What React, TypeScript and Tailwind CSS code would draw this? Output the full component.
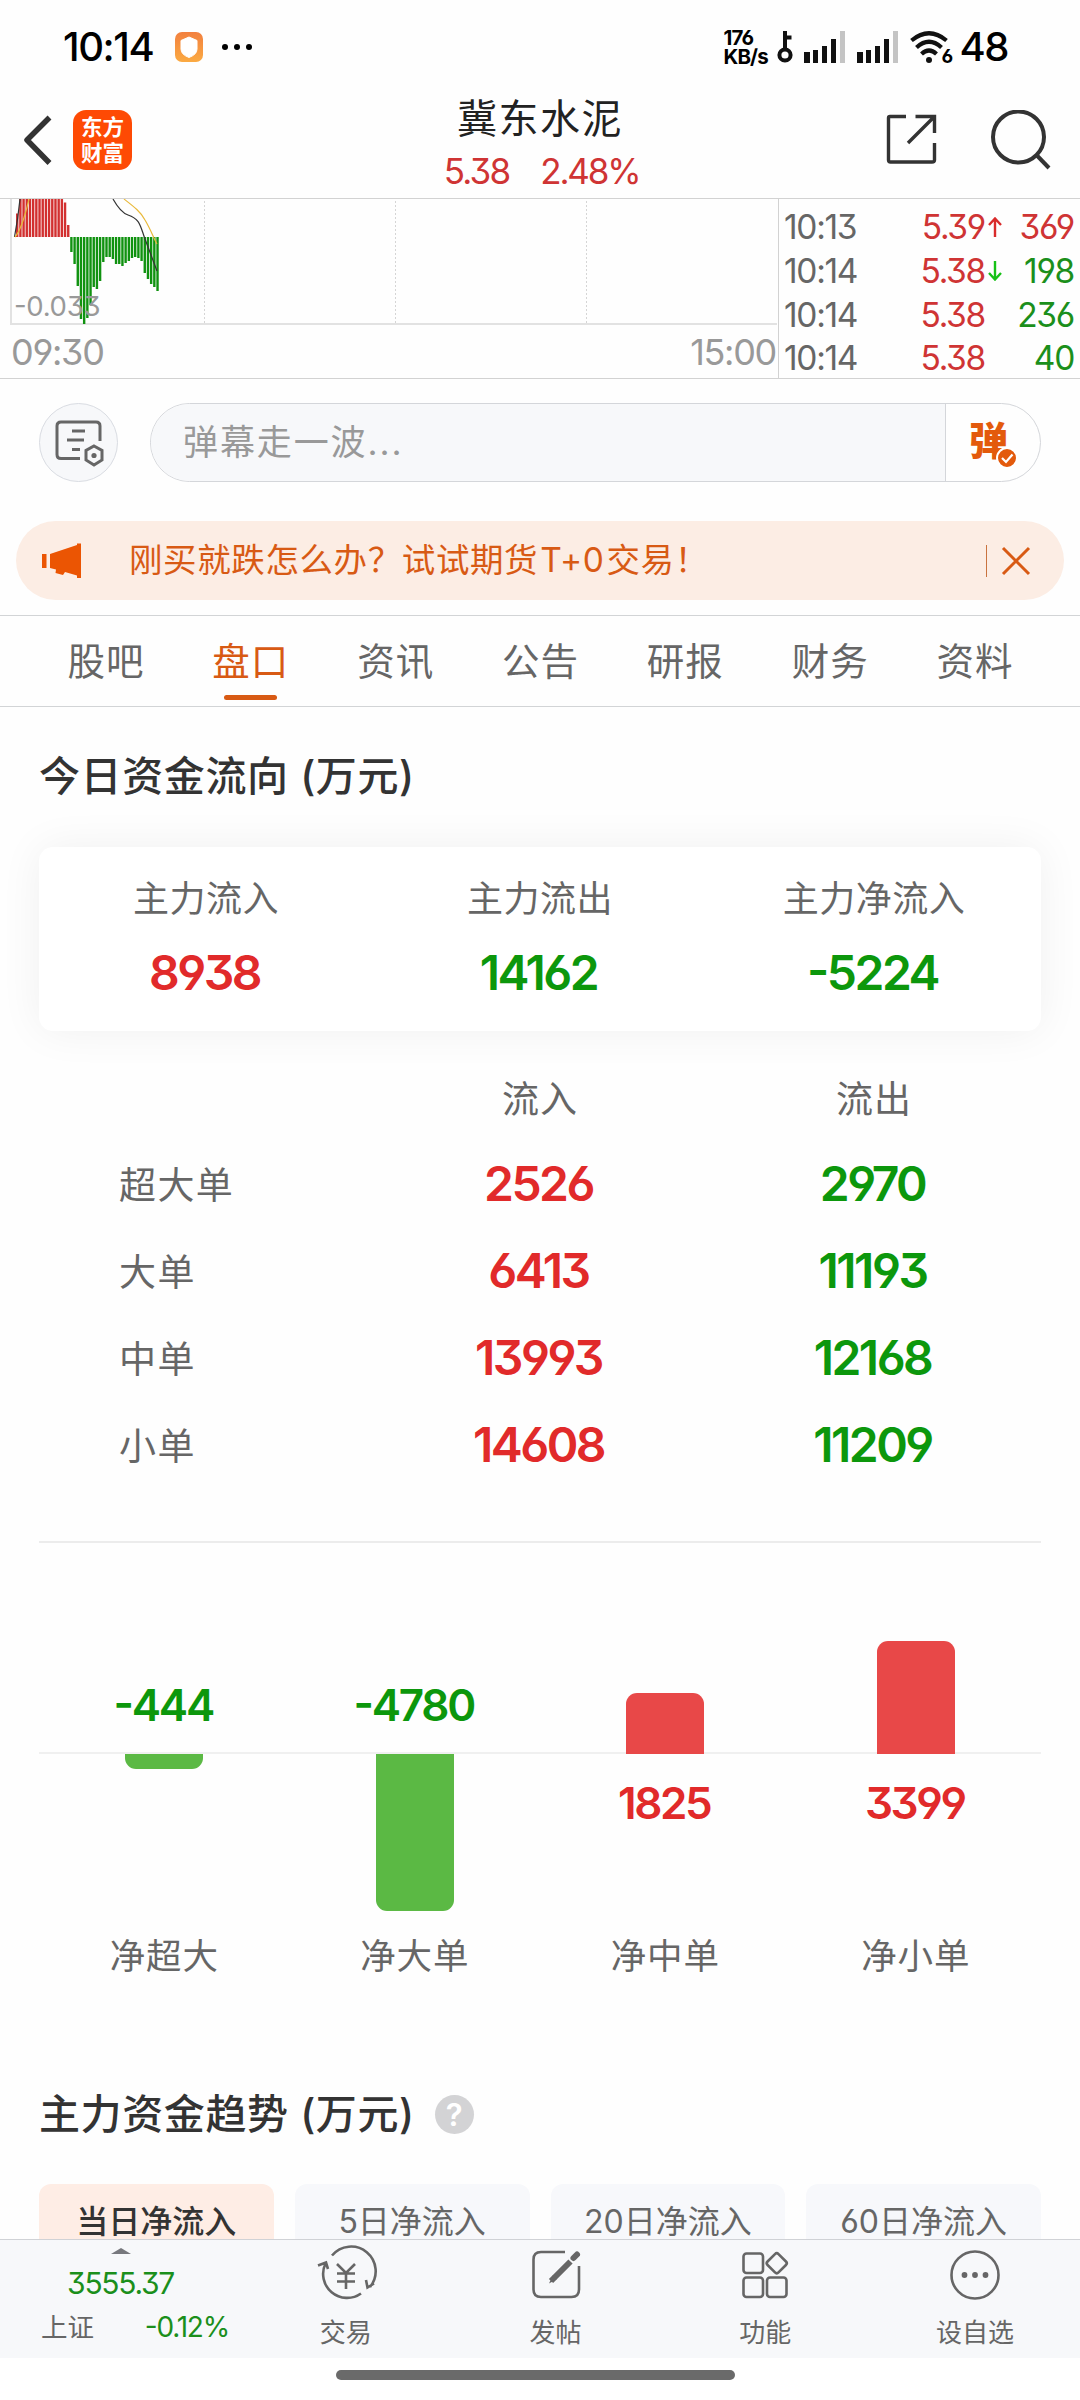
import { ReactNode } from "react";

const RED_BARS = [23.5, 38, 38, 38, 38, 38, 38, 38, 38, 38, 38, 38, 38, 38, 38, 34.5, 12];
const GREEN_BARS = [
  15, 27, 49, 82, 87, 81, 68, 50, 52, 44, 25, 20, 20, 22, 27, 27, 29, 26, 24, 21, 20, 21, 24, 36, 42, 47, 50, 54,
];

const ticks = [
  { time: "10:13", price: "5.39", dir: "up", vol: "369", color: "text-[#cf3434]" },
  { time: "10:14", price: "5.38", dir: "down", vol: "198", color: "text-[#1b8f1b]" },
  { time: "10:14", price: "5.38", dir: "", vol: "236", color: "text-[#1b8f1b]" },
  { time: "10:14", price: "5.38", dir: "", vol: "40", color: "text-[#1b8f1b]" },
];

const tabs = ["股吧", "盘口", "资讯", "公告", "研报", "财务", "资料"];

const summary = [
  { label: "主力流入", value: "8938", color: "text-[#e12a2a]" },
  { label: "主力流出", value: "14162", color: "text-[#0c970c]" },
  { label: "主力净流入", value: "-5224", color: "text-[#0c970c]" },
];

const orders = [
  { label: "超大单", inflow: "2526", outflow: "2970" },
  { label: "大单", inflow: "6413", outflow: "11193" },
  { label: "中单", inflow: "13993", outflow: "12168" },
  { label: "小单", inflow: "14608", outflow: "11209" },
];

const netBars = [
  { label: "净超大", value: "-444", height: 15, up: false },
  { label: "净大单", value: "-4780", height: 157, up: false },
  { label: "净中单", value: "1825", height: 61, up: true },
  { label: "净小单", value: "3399", height: 113, up: true },
];

const periods = ["当日净流入", "5日净流入", "20日净流入", "60日净流入"];

// Raises the hyphen to the middle of the digits
function Num({ children }: { children: string }) {
  return <span className="[font-feature-settings:'cv09','cv03','cv04','case']">{children}</span>;
}

function Signal() {
  return (
    <svg width="42" height="33" viewBox="0 0 42 33">
      <rect x="0" y="21" width="6" height="11" fill="#111" />
      <rect x="9" y="19" width="5" height="13" fill="#111" />
      <rect x="18" y="15" width="5" height="17" fill="#111" />
      <rect x="27" y="8" width="5" height="24" fill="#111" />
      <rect x="36" y="0" width="5" height="32" fill="#c4c4c4" />
    </svg>
  );
}

function StatusBar() {
  return (
    <div className="h-[94px] flex items-center text-black pl-[63px] pr-[72px]">
      <span className="text-[40px] leading-none font-medium tracking-[-1.400px] w-[112px]">10:14</span>
      <svg width="28" height="30" viewBox="0 0 28 30">
        <defs>
          <linearGradient id="shield" x1="0" y1="0" x2="0" y2="1">
            <stop offset="0" stopColor="#f2803f" />
            <stop offset="1" stopColor="#fbaa42" />
          </linearGradient>
        </defs>
        <rect width="28" height="30" rx="7" fill="url(#shield)" />
        <path d="M14 5 L22 8.5 V17 Q22 22.5 14 25.5 Q6 22.5 6 17 V8.5 Z" fill="#fff" stroke="#fff" strokeLinejoin="round" />
      </svg>
      <svg className="ml-[19px]" width="30" height="8" viewBox="0 0 30 8">
        <circle cx="3" cy="4" r="3" />
        <circle cx="15" cy="4" r="3" />
        <circle cx="27" cy="4" r="3" />
      </svg>
      <div className="ml-auto flex items-center">
        <div className="w-[53px] text-[20.500px] leading-[19px] font-bold tracking-[-0.900px]">
          <div>176</div>
          <div>KB/s</div>
        </div>
        <svg width="16" height="33" viewBox="0 0 16 33">
          <circle cx="8" cy="24" r="5.6" fill="none" stroke="#111" strokeWidth="4" />
          <path d="M8 19 V0 M8 6.5 H14.5" fill="none" stroke="#111" strokeWidth="4" />
        </svg>
        <div className="ml-[11px] flex gap-[11px]">
          <Signal />
          <Signal />
        </div>
        <div className="relative ml-[11px] w-[44px] h-[33px]">
          <svg width="44" height="33" viewBox="0 0 44 33">
            <g fill="none" stroke="#111" strokeWidth="4.2">
              <path d="M1.5 9.5 Q19 -5 36.500 9.500" />
              <path d="M6.500 16.500 Q19 5 31.500 16.500" />
              <path d="M11.500 23 Q19 16 26.500 23" />
            </g>
            <circle cx="19" cy="29" r="3" fill="#111" />
          </svg>
          <span className="absolute left-[32px] top-[16px] text-[19px] leading-[19px] font-bold">6</span>
        </div>
        <span className="ml-[6px] text-[40px] leading-none font-medium tracking-[-1.5px]">48</span>
      </div>
    </div>
  );
}

function Header() {
  return (
    <header className="h-[105px] flex justify-between border-b border-[#d2d2d2]">
      <div className="w-[360px] flex pt-[16px] pl-[22px]">
        <svg className="mt-[4px]" width="32" height="52" viewBox="0 0 32 52" fill="none" stroke="#333" strokeWidth="5.500">
          <path d="M27.500 3.500 L5 26 L27.500 49" strokeLinejoin="round" />
        </svg>
        <div className="ml-[19px] w-[59px] h-[60px] rounded-[13px] bg-[#fe4a04] text-white text-[21.500px] leading-[26px] font-bold text-center pt-[4px]">
          <div>东方</div>
          <div>财富</div>
        </div>
      </div>
      <div className="w-[360px] flex flex-col items-center">
        <h1 className="mt-[1px] text-[40px] leading-[48px] tracking-[1.500px] text-[#222]">冀东水泥</h1>
        <div className="mt-[10px] ml-[3px] flex gap-[31px] text-[35px] leading-[36px] tracking-[-1.800px] text-[#cf3434]">
          <span>5.38</span>
          <span className="tracking-[-2.200px]">2.48%</span>
        </div>
      </div>
      <div className="w-[360px] flex pt-[16px] justify-end pr-[28px]">
        <svg className="mt-[4px]" width="52" height="52" viewBox="0 0 52 52" fill="none" stroke="#333" strokeWidth="3.400">
          <path d="M20 2.500 H4 Q2.500 2.500 2.500 4 V46 Q2.500 48 4.500 48 H46 Q48.500 48 48.500 46 V29 M29.500 2.500 H48.500 V19 M48 3 L22 29" />
        </svg>
        <svg className="ml-[52px]" width="62" height="60" viewBox="0 0 62 60" fill="none" stroke="#333" strokeWidth="4">
          <circle cx="28.500" cy="27" r="25.500" />
          <path d="M46 44.500 L59 58" />
        </svg>
      </div>
    </header>
  );
}

function Chart() {
  return (
    <div className="h-[180px] flex border-b border-[#d2d2d2]">
      <div className="w-[778px] flex flex-col text-[#999]">
        <div className="relative h-[126px]">
          <svg className="absolute left-0 top-0" width="777" height="126" viewBox="0 0 777 126">
            <g stroke="#d5d5d5" strokeDasharray="2 2">
              <path d="M204.500 2 V125 M395.500 2 V125 M586.500 2 V125" />
            </g>
            <path d="M11 0 V125 H777" fill="none" stroke="#e2e2e2" strokeWidth="2" />
            {RED_BARS.map((h, i) => (
              <rect key={i} x={16 + i * 3.19} y={38 - h} width="2.400" height={h} fill="#d23030" />
            ))}
            {GREEN_BARS.map((h, i) => (
              <rect key={i} x={70.200 + i * 3.19} y="38" width="2.400" height={h} fill="#109210" />
            ))}
            <path d="M14.500 38 Q18 20 20 0 M113 0 C118 9 122 14 128 16 C140 20 140 26 145 40 L157 72" fill="none" stroke="#333" strokeWidth="1.200" />
            <path d="M15 38 Q22 30 29 0 M124 0 C133 7 141 13 145 21 C151 31 154 40 157 45" fill="none" stroke="#e9b93a" strokeWidth="1.200" />
          </svg>
          <span className="absolute left-[14px] top-[94px] text-[27.500px] leading-none tracking-[-0.300px]">
            <Num>-0.033</Num>
          </span>
        </div>
        <div className="flex justify-between pl-[11px] pr-[2px] pt-[9px] text-[36px] leading-none tracking-[-1.300px]">
          <span>09:30</span>
          <span>15:00</span>
        </div>
      </div>
      <div className="flex-1 border-l border-[#d2d2d2] pl-[5px] pr-[6px] pt-[6px] text-[33.500px] leading-[44px] tracking-[-1.300px]">
        {ticks.map((t, i) => (
          <div key={i} className="flex h-[43.800px]">
            <span className="w-[121px] text-[#666]">{t.time}</span>
            <span className="w-[80px] text-right text-[#cf3434]">{t.price}</span>
            <span className="w-[20px] flex items-center justify-center">
              {t.dir !== "" && (
                <svg width="14" height="20" viewBox="0 0 14 20" fill="none" strokeWidth="2.400" stroke={t.dir === "up" ? "#d92b2b" : "#16c116"}>
                  <path d={t.dir === "up" ? "M7 20 V2 M1 8 L7 1.500 L13 8" : "M7 0 V18 M1 12 L7 18.500 L13 12"} />
                </svg>
              )}
            </span>
            <span className={`flex-1 text-right ${t.color}`}>{t.vol}</span>
          </div>
        ))}
      </div>
    </div>
  );
}

function DanmuBar() {
  return (
    <div className="h-[142px] flex pt-[24px] pl-[39px] pr-[39px]">
      <div className="w-[79px] h-[79px] rounded-full border-[1.500px] border-[#d9dce2] bg-[#f7f8fa] flex items-center justify-center">
        <svg width="50" height="48" viewBox="0 0 50 48" fill="none" stroke="#666" strokeWidth="3">
          <path d="M26 39.500 H7 Q3 39.500 3 35.500 V7 Q3 3 7 3 H42 Q46 3 46 7 V22" />
          <path d="M18 12 H31 M13 21 H30 M18 30.500 H26" strokeWidth="2.800" />
          <path d="M40 27 L48 31.500 V41 L40 46 L32 41 V31.500 Z" />
          <circle cx="40" cy="36.500" r="2.600" fill="#666" stroke="none" />
        </svg>
      </div>
      <div className="ml-[32px] flex-1 flex h-[79px] rounded-full border-[1.500px] border-[#d4d6da] overflow-hidden">
        <div className="flex-1 bg-[#f7f8fa] pl-[32px] flex items-center text-[35px] tracking-[1.900px] text-[#999]">弹幕走一波...</div>
        <div className="w-[95px] border-l border-[#d4d6da] relative">
          <span className="absolute left-[23px] top-[17px] text-[39px] leading-none font-black text-[#e35a0c]">弹</span>
          <svg className="absolute left-[50px] top-[43px]" width="22" height="22" viewBox="0 0 22 22">
            <circle cx="11" cy="11" r="10" fill="#e35a0c" stroke="#fff" strokeWidth="2" />
            <path d="M6 11 L10 15 L16.500 7.500" fill="none" stroke="#fff" strokeWidth="2.200" />
          </svg>
        </div>
      </div>
    </div>
  );
}

function Banner() {
  return (
    <div className="mx-[16px] h-[79px] rounded-full bg-[#fcede4] flex items-center pl-[25px] text-[#d85a14]">
      <svg width="42" height="36" viewBox="0 0 42 36" fill="#eb5503">
        <rect x="1" y="11" width="4.500" height="14" />
        <path d="M9 11 L36 2 V0.500 H40 V35 H36 V32.500 L24 29 L22 32 L14.500 30 L15 26.500 L9 25 Z" />
      </svg>
      <span className="ml-[46px] mt-[1px] text-[33.500px] leading-none tracking-[0.600px]">
        刚买就跌怎么办？试试期货<span className="mx-[2px]">T+0</span>交易！
      </span>
      <span className="ml-auto w-[1.500px] h-[32px] bg-[#c9733f]" />
      <svg className="ml-[14px] mr-[33px]" width="30" height="30" viewBox="0 0 30 30" fill="none" stroke="#d85a14" strokeWidth="3">
        <path d="M2 2 L28 28 M28 2 L2 28" />
      </svg>
    </div>
  );
}

function Tabs() {
  return (
    <nav className="mt-[15px] h-[92px] border-y border-[#d2d4d6] flex px-[33px]">
      {tabs.map((t) => (
        <div key={t} className="relative flex-1 flex justify-center pt-[25px]">
          <span className={`ml-[1px] text-[37.500px] leading-[42px] tracking-[1px] ${t === "盘口" ? "text-[#d85a14]" : "text-[#666]"}`}>{t}</span>
          {t === "盘口" && <span className="absolute bottom-[6px] w-[53px] h-[5px] rounded-full bg-[#d85a14]" />}
        </div>
      ))}
    </nav>
  );
}

function NetChart() {
  return (
    <div className="relative h-[428px]">
      <div className="absolute inset-x-0 top-[209px] h-[2px] bg-[#f0f0f0]" />
      <div className="absolute inset-0 grid grid-cols-4">
        {netBars.map((b) => (
          <div key={b.label} className="flex flex-col items-center">
            <div className="h-[211px] flex flex-col justify-end items-center">
              {b.up ? (
                <div className="w-[78px] rounded-t-[11px] bg-[#e84848]" style={{ height: b.height }} />
              ) : (
                <span className="mb-[26px] mr-[2px] text-[44px] leading-[46px] font-semibold tracking-[-2.200px] text-[#0c970c]">
                  <Num>{b.value}</Num>
                </span>
              )}
            </div>
            <div className="h-[180px] flex flex-col items-center">
              {b.up ? (
                <span className="mt-[26px] mr-[2px] text-[44px] leading-[46px] font-semibold tracking-[-2.400px] text-[#e12a2a]">{b.value}</span>
              ) : (
                <div className="w-[78px] rounded-b-[11px] bg-[#5bb944]" style={{ height: b.height }} />
              )}
            </div>
            <span className="text-[35.500px] leading-[46px] tracking-[0.800px] text-[#666]">{b.label}</span>
          </div>
        ))}
      </div>
    </div>
  );
}

function Title({ children }: { children: ReactNode }) {
  return <h2 className="text-[41px] leading-[48px] font-medium tracking-[0.600px] text-[#333]">{children}</h2>;
}

function Content() {
  return (
    <main className="h-[1532px] overflow-hidden px-[39px] pt-[45px]">
      <Title>今日资金流向 (万元)</Title>
      <div className="mt-[47px] h-[184px] rounded-[14px] bg-white shadow-[0_0_44px_rgba(0,0,0,0.06)] grid grid-cols-3 pt-[28px]">
        {summary.map((s) => (
          <div key={s.label} className="flex flex-col items-center">
            <span className="text-[36px] leading-[48px] tracking-[0.500px] text-[#666]">{s.label}</span>
            <span className={`mt-[25px] mr-[3px] text-[48px] leading-[50px] font-semibold tracking-[-2.500px] ${s.color}`}>
              <Num>{s.value}</Num>
            </span>
          </div>
        ))}
      </div>
      <div className="mt-[45px] grid grid-cols-3 text-center text-[37px] leading-[48px] tracking-[1px] text-[#666]">
        <span />
        <span>流入</span>
        <span>流出</span>
      </div>
      <div className="mt-[16px] mb-[53px]">
        {orders.map((o) => (
          <div key={o.label} className="h-[87px] grid grid-cols-3 items-center text-center text-[48px] leading-none font-semibold tracking-[-2.500px]">
            <span className="pt-[4px] pl-[80px] text-left text-[37px] font-normal tracking-[1.400px] text-[#666]">{o.label}</span>
            <span className="pr-[3px] text-[#e12a2a]">{o.inflow}</span>
            <span className="pr-[3px] text-[#0c970c]">{o.outflow}</span>
          </div>
        ))}
      </div>
      <div className="h-[2px] bg-[#ececec]" />
      <NetChart />
      <div className="mt-[119px] flex items-center">
        <Title>主力资金趋势 (万元)</Title>
        <span className="ml-[20px] w-[39px] h-[39px] rounded-full bg-[#d3d3d5] text-white text-[31px] leading-[40px] font-semibold text-center">?</span>
      </div>
      <div className="mt-[46px] grid grid-cols-4 gap-[21px]">
        {periods.map((p, i) => (
          <div
            key={p}
            className={`h-[78px] rounded-[12px] pt-[18px] text-center text-[32px] leading-[40px] ${
              i === 0 ? "bg-[#feede5] font-medium text-[#333]" : "bg-[#f7f8fb] text-[#666]"
            }`}
          >
            {p}
          </div>
        ))}
      </div>
    </main>
  );
}

function NavItem({ label, children }: { label: string; children: ReactNode }) {
  return (
    <div className="flex-1 flex flex-col items-center pt-[9px]">
      <svg className="overflow-visible" width="58" height="52" viewBox="0 0 58 52" fill="none" stroke="#666" strokeWidth="2.600">
        {children}
      </svg>
      <span className="mt-[16px] text-[26px] leading-[32px] text-[#666]">{label}</span>
    </div>
  );
}

function BottomNav() {
  return (
    <footer>
      <div className="h-[119px] border-t border-[#d0d2d6] bg-[#f7f8fa] flex">
        <div className="w-[241px] flex flex-col">
          <svg className="ml-[111px] mt-[8px]" width="20" height="6" viewBox="0 0 20 6" fill="#77787d">
            <path d="M10 0 L20 6 H0 Z" />
          </svg>
          <span className="mt-[12px] w-[241px] text-center text-[30px] leading-[34px] tracking-[-1.300px] text-[#1b8f1b]">3555.37</span>
          <div className="mt-[10px] flex justify-between pl-[41px] pr-[12px] leading-[34px]">
            <span className="text-[26.500px] text-[#666]">上证</span>
            <span className="text-[28px] tracking-[-1.200px] text-[#1b8f1b]">
              <Num>-0.12%</Num>
            </span>
          </div>
        </div>
        <NavItem label="交易">
          <path d="M15 6.500 A24 24 0 0 1 53 38 M44 44.500 A24 24 0 0 1 8.500 14.500 M1 16.500 L9 13.500 L11 20 M49 31 L50.500 38.500 L57 34.500" />
          <path d="M20 15 L29 24 L38 15 M20 24.500 H38 M20 32.500 H38 M29 24 V40" />
        </NavItem>
        <NavItem label="发帖">
          <path d="M38 3 H14 Q6.500 3 6.500 10.500 V40.500 Q6.500 48 14 48 H44.500 Q52 48 52 40.500 V17" />
          <path d="M24 32 L43.500 12.500" strokeWidth="6" />
          <path d="M46.500 9 L50 5.500" strokeWidth="6" strokeLinecap="round" />
          <path d="M22 34.500 L26 26 L30 30 Z" fill="#666" stroke="none" />
        </NavItem>
        <NavItem label="功能">
          <rect x="7.500" y="4.500" width="19.500" height="19.500" rx="3" />
          <rect x="7.500" y="28.500" width="19.500" height="19.500" rx="3" />
          <rect x="31" y="28.500" width="19.500" height="19.500" rx="3" />
          <rect x="33" y="6.500" width="15.500" height="15.500" rx="2.500" transform="rotate(45 40.750 14.250)" />
        </NavItem>
        <NavItem label="设自选">
          <circle cx="29" cy="26" r="23.500" />
          <g fill="#666" stroke="none">
            <circle cx="18.500" cy="26" r="2.900" />
            <circle cx="29" cy="26" r="2.900" />
            <circle cx="39.500" cy="26" r="2.900" />
          </g>
        </NavItem>
      </div>
      <div className="h-[42px] bg-white pt-[12px] pl-[336px]">
        <div className="w-[399px] h-[10px] rounded-full bg-[#6a6a6a]" />
      </div>
    </footer>
  );
}

export default function App() {
  return (
    <div className="w-[1080px] h-[2400px] overflow-hidden bg-[#fefefe] font-['Inter','Noto_Sans_CJK_SC',sans-serif] [font-feature-settings:'cv09','cv03','cv04']">
      <StatusBar />
      <Header />
      <Chart />
      <DanmuBar />
      <Banner />
      <Tabs />
      <Content />
      <BottomNav />
    </div>
  );
}
